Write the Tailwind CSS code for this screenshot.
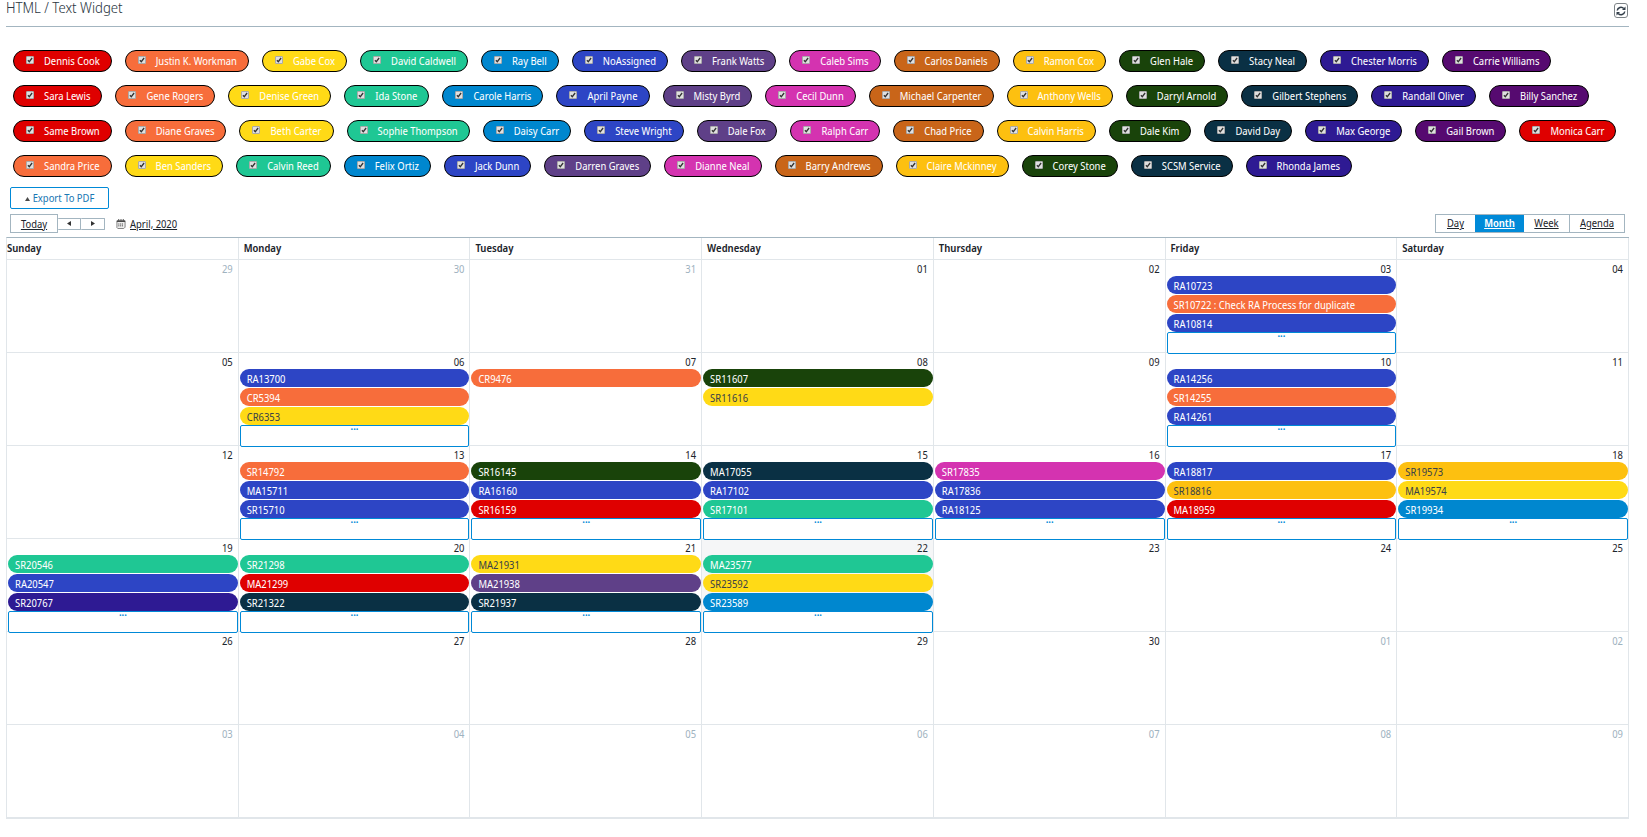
<!DOCTYPE html>
<html lang="en">
<head>
<meta charset="utf-8">
<title>HTML / Text Widget</title>
<script src="https://cdn.jsdelivr.net/npm/@tailwindcss/browser@4"></script>
</head>
<body class="bg-white px-[6px] font-['Noto_Sans_Display','Noto_Sans',sans-serif] text-[10px] leading-4 text-[#1d252c]">
<header class="flex h-[27px] items-start justify-between border-b border-[#a3b5c0] pr-px mr-[12px]">
  <h1 class="text-[14px] leading-4 font-light text-[#2b3742]">HTML / Text Widget</h1>
  <button type="button" aria-label="Refresh" class="mt-[3px] flex h-[15px] w-[14px] items-center justify-center rounded-[3px] border border-[#7d8387] bg-white">
    <svg class="h-[10px] w-[10px]" viewBox="0 0 20 20" fill="none" stroke="#333f4b" stroke-width="3"><path d="M2.5 9a7.500 7.500 0 0 1 13-4"/><path d="M17.500 11a7.500 7.500 0 0 1-13 4"/><path d="M19 1v7h-7z" fill="#333f4b" stroke="none"/><path d="M1 19v-7h7z" fill="#333f4b" stroke="none"/></svg>
  </button>
</header>

<main class="mr-[12px]">
  <div id="people" class="mt-[23px] flex flex-col gap-[13px] pl-[7px]"></div>

  <button type="button" class="mt-[10px] ml-1 flex h-[22px] w-[99px] items-center justify-center gap-[3px] rounded-[2px] border border-[#0089d7] text-[#1a78b4]">
    <svg class="mt-[2px] h-[4px] w-[5px]" viewBox="0 0 5 4" fill="#4b4b4b"><path d="M2.500 0 5 4H0z"/></svg>
    Export To PDF
  </button>

  <div class="mt-[5px] mb-1 flex items-center justify-between pr-1 pl-1">
    <div class="flex items-center">
      <button type="button" class="h-[19px] w-[48px] border border-[#a3b5c0] leading-4 underline">Today</button>
      <button type="button" aria-label="Previous" class="flex h-[12px] w-[23px] items-center justify-center rounded-[1px] border border-l-0 border-[#a3b5c0]"><svg class="h-[5px] w-[4px]" viewBox="0 0 4 5" fill="#333"><path d="M4 0v5L0 2.500z"/></svg></button>
      <button type="button" aria-label="Next" class="flex h-[12px] w-[24px] items-center justify-center rounded-[1px] border border-l-0 border-[#a3b5c0]"><svg class="h-[5px] w-[4px]" viewBox="0 0 4 5" fill="#333"><path d="M0 0v5l4-2.500z"/></svg></button>
      <svg class="mr-1 ml-[11px] h-[10px] w-[10px]" viewBox="0 0 10 11" fill="none" stroke="#444"><path d="M.5 2h9v7L8 10.500H1.500L.5 9.500z" fill="#eee" stroke="#777"/><path d="M.5 2.500h9" stroke-width="1.500"/><path d="M2.500 0v2M5 0v2M7.500 0v2"/><path d="M2 5.500h6M2 7.500h6" stroke-dasharray="1.200 .8"/></svg>
      <a href="#" class="leading-4 underline">April, 2020</a>
    </div>
    <nav class="flex h-[19px] border border-[#a3b5c0] leading-4">
      <a href="#" class="w-[39px] text-center underline">Day</a>
      <a href="#" class="w-[49px] bg-[#008ad8] text-center font-semibold text-white underline">Month</a>
      <a href="#" class="w-[46px] border-r border-[#a3b5c0] text-center underline">Week</a>
      <a href="#" class="w-[54px] text-center underline">Agenda</a>
    </nav>
  </div>

  <table class="w-full table-fixed border-separate border-spacing-0 border-t border-b border-l border-t-[#a3b5c0] border-b-[#e1e6ea] border-l-[#e1e6ea]">
    <thead>
      <tr id="weekdays"></tr>
    </thead>
    <tbody id="days"></tbody>
  </table>
</main>

<script>
const FILL = {
  red: 'bg-[#df0000]', orange: 'bg-[#f76d3b]', yellow: 'bg-[#ffda16]', teal: 'bg-[#1fc794]',
  blue: 'bg-[#0087cf]', royal: 'bg-[#2d45c5]', purple: 'bg-[#5f4088]', pink: 'bg-[#d433b0]',
  brown: 'bg-[#c96519]', amber: 'bg-[#fdc010]', green: 'bg-[#19430a]', navy: 'bg-[#0a3044]',
  indigo: 'bg-[#2e1a93]', violet: 'bg-[#560a70]'
};
const ORDER = Object.keys(FILL);
const PEOPLE = [
  [0, 'Dennis Cook', 'Justin K. Workman', 'Gabe Cox', 'David Caldwell', 'Ray Bell', 'NoAssigned', 'Frank Watts', 'Caleb Sims', 'Carlos Daniels', 'Ramon Cox', 'Glen Hale', 'Stacy Neal', 'Chester Morris', 'Carrie Williams'],
  [0, 'Sara Lewis', 'Gene Rogers', 'Denise Green', 'Ida Stone', 'Carole Harris', 'April Payne', 'Misty Byrd', 'Cecil Dunn', 'Michael Carpenter', 'Anthony Wells', 'Darryl Arnold', 'Gilbert Stephens', 'Randall Oliver', 'Billy Sanchez'],
  [0, 'Same Brown', 'Diane Graves', 'Beth Carter', 'Sophie Thompson', 'Daisy Carr', 'Steve Wright', 'Dale Fox', 'Ralph Carr', 'Chad Price', 'Calvin Harris', 'Dale Kim', 'David Day', 'Max George', 'Gail Brown', 'Monica Carr'],
  [1, 'Sandra Price', 'Ben Sanders', 'Calvin Reed', 'Felix Ortiz', 'Jack Dunn', 'Darren Graves', 'Dianne Neal', 'Barry Andrews', 'Claire Mckinney', 'Corey Stone', 'SCSM Service', 'Rhonda James']
];
document.getElementById('people').innerHTML = PEOPLE.map(([first, ...names]) =>
  `<div class="flex gap-[13px]">` + names.map((name, i) =>
    `<label class="flex h-[22px] items-center rounded-full border border-black pr-[11px] pl-[12px] whitespace-nowrap text-white ${FILL[ORDER[(first + i) % 14]]}">
      <span class="mr-[10px] mb-[2px] grid"><input type="checkbox" checked class="col-start-1 row-start-1 size-2 appearance-none rounded-[1px] border border-[#aaa] bg-[#e0e0e0]"><svg class="pointer-events-none col-start-1 row-start-1 size-2" viewBox="0 0 8 8" fill="none" stroke="#333" stroke-width="1.300"><path d="M1.900 4.200 3.300 5.700 6.100 2"/></svg></span>
      <span>${name}</span></label>`).join('') + `</div>`).join('');

document.getElementById('weekdays').innerHTML =
  ['Sunday', 'Monday', 'Tuesday', 'Wednesday', 'Thursday', 'Friday', 'Saturday'].map((d, i) =>
    `<th scope="col" class="h-[22px] border-r border-b border-[#e1e6ea] p-0 pb-px text-left font-semibold ${i ? 'pl-[5px]' : ''}">${d}</th>`).join('');

const EVENTS = {
  5: ['royal RA10723', 'orange SR10722 : Check RA Process for duplicate', 'royal RA10814', '+'],
  8: ['royal RA13700', 'orange CR5394', 'yellow CR6353', '+'],
  9: ['orange CR9476'],
  10: ['green SR11607', 'yellow SR11616'],
  12: ['royal RA14256', 'orange SR14255', 'royal RA14261', '+'],
  15: ['orange SR14792', 'royal MA15711', 'royal SR15710', '+'],
  16: ['green SR16145', 'royal RA16160', 'red SR16159', '+'],
  17: ['navy MA17055', 'royal RA17102', 'teal SR17101', '+'],
  18: ['pink SR17835', 'royal RA17836', 'royal RA18125', '+'],
  19: ['royal RA18817', 'amber SR18816', 'red MA18959', '+'],
  20: ['amber SR19573', 'yellow MA19574', 'blue SR19934', '+'],
  21: ['teal SR20546', 'royal RA20547', 'indigo SR20767', '+'],
  22: ['teal SR21298', 'red MA21299', 'navy SR21322', '+'],
  23: ['yellow MA21931', 'purple MA21938', 'navy SR21937', '+'],
  24: ['teal MA23577', 'yellow SR23592', 'blue SR23589', '+']
};
const item = e => {
  if (e === '+') return `<button type="button" aria-label="More events" class="relative -mt-px block h-[22px] w-full rounded-[2px] border border-[#0089d7] bg-white"><span class="flex h-[20px] justify-center leading-[1px] font-semibold text-[#0089d7]">...</span></button>`;
  const [, color, text] = e.match(/^(\w+) (.*)$/);
  const ink = color === 'yellow' || color === 'amber' ? 'text-[#3b4248]' : 'text-white';
  return `<div class="mb-px h-[18px] overflow-hidden rounded-full pl-[7px] leading-[20px] whitespace-nowrap ${FILL[color]} ${ink}">${text}</div>`;
};
let rows = '';
for (let w = 0; w < 6; w++) {
  rows += '<tr>';
  for (let d = 0; d < 7; d++) {
    const n = w * 7 + d;
    const outside = n < 3 || n > 32;
    const day = n < 3 ? 29 + n : n > 32 ? n - 32 : n - 2;
    rows += `<td class="border-r border-b border-[#e1e6ea] p-0 align-top ${n === 24 ? 'bg-[#f5f6f7]' : ''}"><div class="h-[92px] pl-px"><div class="h-4 pr-[5px] text-right leading-[18px] ${outside ? 'text-[#9fb3bf]' : ''}">${String(day).padStart(2, '0')}</div>${(EVENTS[n] || []).map(item).join('')}</div></td>`;
  }
  rows += '</tr>';
}
document.getElementById('days').innerHTML = rows;
</script>
</body>
</html>
